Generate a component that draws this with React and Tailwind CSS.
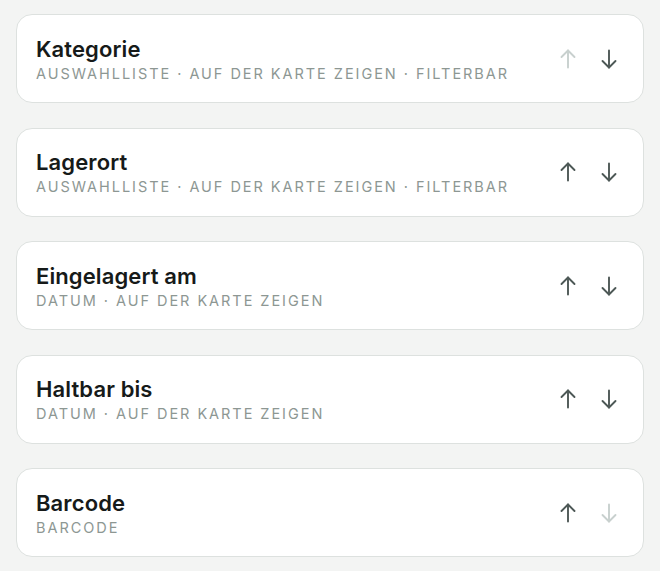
const fields = [
  { name: 'Kategorie', meta: 'Auswahlliste · Auf der Karte zeigen · Filterbar', up: false, down: true },
  { name: 'Lagerort', meta: 'Auswahlliste · Auf der Karte zeigen · Filterbar', up: true, down: true },
  { name: 'Eingelagert am', meta: 'Datum · Auf der Karte zeigen', up: true, down: true },
  { name: 'Haltbar bis', meta: 'Datum · Auf der Karte zeigen', up: true, down: true },
  { name: 'Barcode', meta: 'Barcode', up: true, down: false },
];

function Arrow({ dir, enabled }) {
  return (
    <button
      disabled={!enabled}
      className={enabled ? 'text-[#4d5856]' : 'text-[#c8d0ce]'}
    >
      <svg
        width="16"
        height="20"
        viewBox="0 0 16 20"
        fill="none"
        stroke="currentColor"
        strokeWidth="1.9"
        strokeLinecap="round"
        strokeLinejoin="round"
        className={dir === 'down' ? 'rotate-180' : ''}
      >
        <path d="M8 1.5V18.5" />
        <path d="M1.5 8L8 1.5L14.5 8" />
      </svg>
    </button>
  );
}

export default function App() {
  return (
    <div className="min-h-screen bg-[#f3f4f3] px-4 pt-[14px] font-['Inter',sans-serif]">
      <div className="flex flex-col gap-[24.5px]">
        {fields.map((f) => (
          <div
            key={f.name}
            className="flex h-[89px] items-center justify-between rounded-2xl border border-[#dde1df] bg-white pl-[19px] pr-[26px]"
          >
            <div className="flex flex-col pt-[1px]">
              <span className="text-[22px] font-semibold leading-7 tracking-[0.005em] text-[#161a19]">{f.name}</span>
              <span className="mt-[1px] text-[14.5px] uppercase leading-5 tracking-[0.135em] text-[#8d9793]">
                {f.meta}
              </span>
            </div>
            <div className="flex items-center gap-[25px]">
              <Arrow dir="up" enabled={f.up} />
              <Arrow dir="down" enabled={f.down} />
            </div>
          </div>
        ))}
      </div>
    </div>
  );
}
